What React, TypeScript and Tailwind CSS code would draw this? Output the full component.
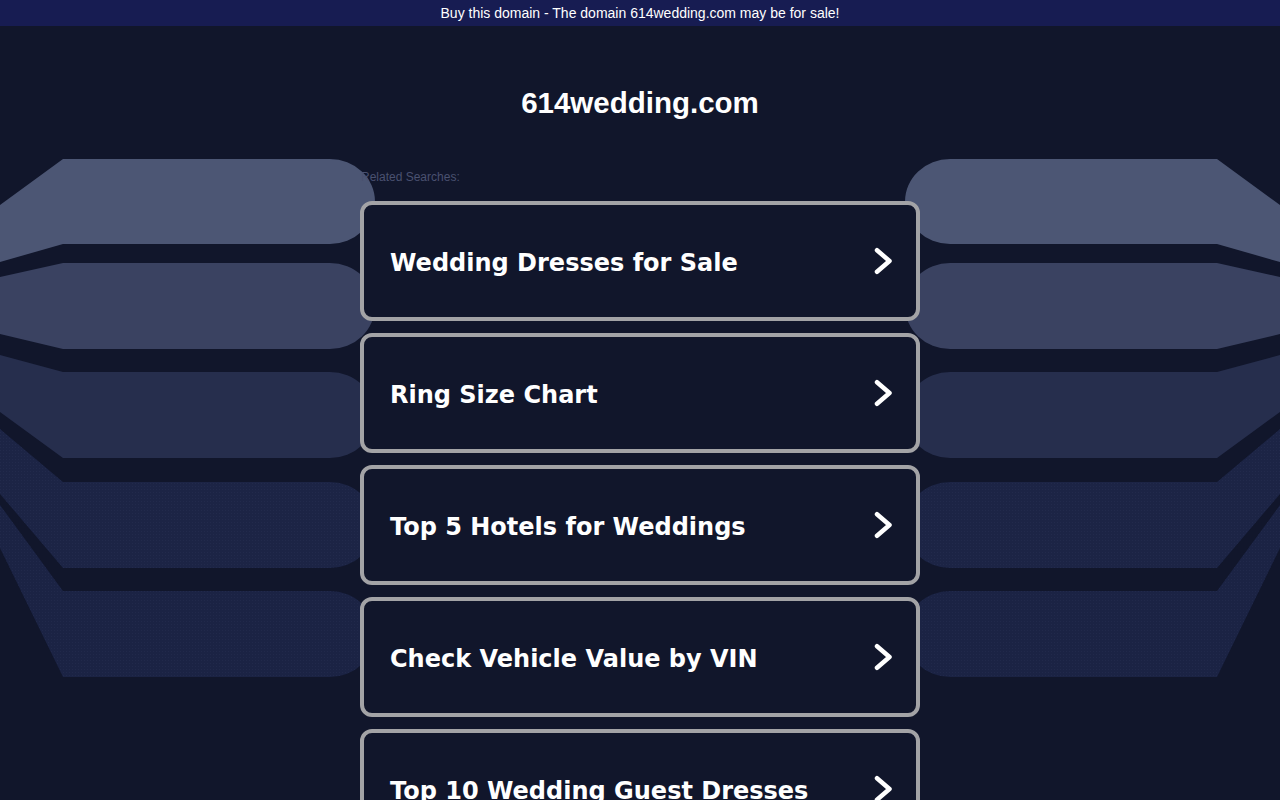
const searches = [
  'Wedding Dresses for Sale',
  'Ring Size Chart',
  'Top 5 Hotels for Weddings',
  'Check Vehicle Value by VIN',
  'Top 10 Wedding Guest Dresses',
];

// left-side bands: top, bottom, y at x=0 for top and bottom edge
const bands = [
  { t: 159, b: 244, tl: 205, bl: 262, fill: '#4c5674', dots: false },
  { t: 263, b: 349, tl: 277, bl: 334, fill: '#3a4261', dots: false },
  { t: 372, b: 458, tl: 355, bl: 412, fill: '#262e4d', dots: false },
  { t: 482, b: 568, tl: 429, bl: 494, fill: '#1c2445', dots: true },
  { t: 591, b: 677, tl: 505, bl: 548, fill: '#1b2344', dots: true },
];

function bandPath(t: number, b: number, tl: number, bl: number) {
  const r = (b - t) / 2;
  return `M0 ${tl} L63 ${t} L330 ${t} A45 ${r} 0 0 1 375 ${t + r} A45 ${r} 0 0 1 330 ${b} L63 ${b} L0 ${bl} Z`;
}

function Backdrop() {
  return (
    <svg className="absolute left-0 top-0 pointer-events-none" width="1280" height="800" viewBox="0 0 1280 800">
      <defs>
        <pattern id="dots" width="3" height="3" patternUnits="userSpaceOnUse">
          <rect width="1" height="1" fill="#2a3356" />
        </pattern>
      </defs>
      {[false, true].map((mirror) => (
        <g key={String(mirror)} transform={mirror ? 'translate(1280 0) scale(-1 1)' : undefined}>
          {bands.map((s, i) => (
            <g key={i}>
              <path d={bandPath(s.t, s.b, s.tl, s.bl)} fill={s.fill} />
              {s.dots && <path d={bandPath(s.t, s.b, s.tl, s.bl)} fill="url(#dots)" opacity="0.4" />}
            </g>
          ))}
        </g>
      ))}
    </svg>
  );
}

function Chevron() {
  return (
    <svg width="18" height="28" viewBox="0 0 18 28" className="shrink-0">
      <path d="M3 3.25 L15.5 14 L3 24.75" fill="none" stroke="white" strokeWidth="4.5" strokeLinecap="round" strokeLinejoin="round" />
    </svg>
  );
}

export default function App() {
  return (
    <div className="relative w-[1280px] h-[800px] overflow-hidden bg-[#11162b] font-['Liberation_Sans',Arial,sans-serif]">
      <Backdrop />
      <div className="relative h-[26px] bg-[#171c52] flex items-center justify-center text-white text-[14px]">
        Buy this domain - The domain 614wedding.com may be for sale!
      </div>
      <div className="relative w-[560px] mx-auto">
        <h1 className="pt-[60px] text-center text-white font-bold text-[29.5px] leading-[34px]">614wedding.com</h1>
        <div className="mt-[50px] pl-px text-[12px] leading-[14px] text-[#4a5170]">Related Searches:</div>
        <div className="mt-[17px] flex flex-col gap-[12px]">
          {searches.map((s) => (
            <a
              key={s}
              href="#"
              className="h-[120px] shrink-0 flex items-center justify-between rounded-[12px] border-[4px] border-[#a3a3a6] bg-[#11162b] pl-[26px] pr-[24px]"
            >
              <span className="pt-[3px] text-white font-bold text-[24px] font-['DejaVu_Sans',Verdana,sans-serif]">{s}</span>
              <Chevron />
            </a>
          ))}
        </div>
      </div>
    </div>
  );
}
